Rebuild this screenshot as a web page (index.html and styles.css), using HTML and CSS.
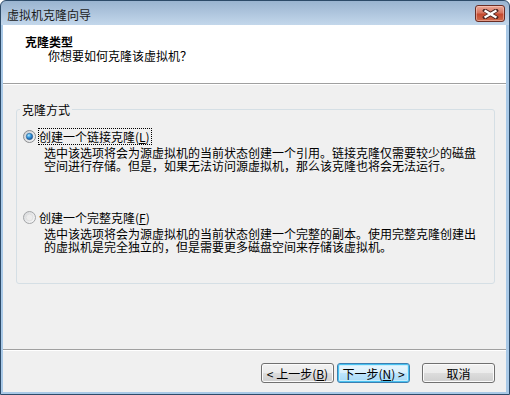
FILE: index.html
```html
<!DOCTYPE html>
<html lang="zh-CN">
<head>
    <meta charset="UTF-8">
    <title>虚拟机克隆向导</title>
    <link rel="stylesheet" href="styles.css">
</head>
<body>
    <div class="window">
        <div class="titlebar">
            <span class="title-text">虚拟机克隆向导</span>
            <button class="close-btn" aria-label="关闭">
                <svg width="17" height="10" viewBox="0 0 17 10">
                    <path d="M3 1.5 L14 8.5 M14 1.5 L3 8.5" stroke="#4a2420" stroke-width="4" stroke-linecap="square"/>
                    <path d="M3.5 2 L13.5 8 M13.5 2 L3.5 8" stroke="#ffffff" stroke-width="2.2" stroke-linecap="square"/>
                </svg>
            </button>
        </div>
        <div class="client">
            <div class="header">
                <div class="header-title">克隆类型</div>
                <div class="header-sub">你想要如何克隆该虚拟机？</div>
            </div>
            <div class="content">
                <fieldset class="group">
                    <legend>克隆方式</legend>
                    <div class="option">
                        <div class="option-row">
                            <svg class="radio" width="13" height="13" viewBox="0 0 13 13">
                                <defs>
                                    <linearGradient id="ringOn" x1="0" y1="0" x2="1" y2="1">
                                        <stop offset="0" stop-color="#c9cdd3"/>
                                        <stop offset="1" stop-color="#f7f7f7"/>
                                    </linearGradient>
                                    <radialGradient id="dot" cx="38%" cy="32%" r="70%">
                                        <stop offset="0" stop-color="#b4ecff"/>
                                        <stop offset="0.45" stop-color="#3a9be0"/>
                                        <stop offset="1" stop-color="#0f4f9a"/>
                                    </radialGradient>
                                </defs>
                                <circle cx="6.5" cy="6.5" r="6" fill="url(#ringOn)" stroke="#8a8c8e"/>
                                <circle cx="6.5" cy="6.5" r="3.2" fill="url(#dot)" stroke="#2a5f8e" stroke-width="0.6"/>
                            </svg>
                            <span class="option-label focused">创建一个链接克隆(<u>L</u>)</span>
                        </div>
                        <div class="option-desc">
                            <div>选中该选项将会为源虚拟机的当前状态创建一个引用。链接克隆仅需要较少的磁盘</div>
                            <div>空间进行存储。但是，如果无法访问源虚拟机，那么该克隆也将会无法运行。</div>
                        </div>
                    </div>
                    <div class="option second">
                        <div class="option-row">
                            <svg class="radio" width="13" height="13" viewBox="0 0 13 13">
                                <defs>
                                    <linearGradient id="ringOff" x1="0" y1="0" x2="1" y2="1">
                                        <stop offset="0" stop-color="#d4d6d9"/>
                                        <stop offset="1" stop-color="#fbfbfb"/>
                                    </linearGradient>
                                </defs>
                                <circle cx="6.5" cy="6.5" r="6" fill="url(#ringOff)" stroke="#a3a5a7"/>
                                <circle cx="6.5" cy="6.5" r="3.4" fill="#ececec" stroke="#d8d8d8" stroke-width="0.6"/>
                            </svg>
                            <span class="option-label">创建一个完整克隆(<u>F</u>)</span>
                        </div>
                        <div class="option-desc">
                            <div>选中该选项将会为源虚拟机的当前状态创建一个完整的副本。使用完整克隆创建出</div>
                            <div>的虚拟机是完全独立的，但是需要更多磁盘空间来存储该虚拟机。</div>
                        </div>
                    </div>
                </fieldset>
            </div>
            <div class="footer">
                <button class="btn">&lt; 上一步(<u>B</u>)</button>
                <button class="btn default">下一步(<u>N</u>) &gt;</button>
                <button class="btn cancel">取消</button>
            </div>
        </div>
    </div>
</body>
</html>
```

FILE: styles.css
```css
* {
    margin: 0;
    padding: 0;
    box-sizing: border-box;
}

body {
    background: #fff;
    color: #000;
    font-family: "Noto Sans CJK SC", "Noto Sans", sans-serif;
    font-size: 12px;
    line-height: 13px;
}

.window {
    width: 510px;
    height: 395px;
    display: flex;
    flex-direction: column;
    border: 1px solid #2d4b69;
    border-radius: 6px 6px 0 0;
    padding: 0 3px 2px 2px;
    background: linear-gradient(to bottom, #9ab4d0 0, #c3d7eb 24px, #a9c9e7 24px, #a9c9e7 100%);
}

.titlebar {
    height: 24px;
    display: flex;
    align-items: flex-start;
    justify-content: space-between;
}

.title-text {
    padding: 7px 0 0 4px;
    color: #1b1b1b;
}

.close-btn {
    width: 30px;
    height: 17px;
    margin: 4px 1px 0 0;
    display: flex;
    align-items: center;
    justify-content: center;
    border: 1px solid #6a2d24;
    border-radius: 3px;
    background: linear-gradient(to bottom, #eaa897 0, #d77560 45%, #c4492f 55%, #cf6a4c 100%);
    box-shadow: inset 0 0 0 1px rgba(255, 220, 210, 0.45);
}

.client {
    flex: 1;
    display: flex;
    flex-direction: column;
    background: #f0f0f0;
}

.header {
    height: 59px;
    padding: 10px 0 0 22px;
    background: #fff;
    border-bottom: 1px solid #a0a0a0;
    box-shadow: 0 1px 0 #fff;
}

.header-title {
    font-weight: bold;
    line-height: 14px;
}

.header-sub {
    padding-left: 23px;
    line-height: 14px;
}

.content {
    flex: 1;
    padding: 19px 11px 0 13px;
}

.group {
    height: 181px;
    border: 1px solid #d5dfe5;
    border-radius: 3px;
    padding: 0;
}

.group legend {
    margin-left: 3px;
    padding: 0 2px;
    line-height: 13px;
}

.option {
    padding: 12px 0 0 6px;
}

.option.second {
    padding-top: 35px;
}

.option-row {
    display: flex;
    align-items: center;
    height: 17px;
}

.radio {
    flex: none;
}

.option-label {
    margin-left: 2px;
    border: 1px solid transparent;
    line-height: 15px;
    padding-right: 1px;
}

.option-label.focused {
    border: 1px dotted #000;
}

.option-desc {
    margin: 3px 0 0 21px;
    font-family: "Liberation Sans", "Noto Sans CJK SC", sans-serif;
    line-height: 13px;
}

.footer {
    height: 43px;
    display: flex;
    justify-content: flex-end;
    padding: 13px 11px 0 0;
    border-top: 1px solid #a0a0a0;
    box-shadow: inset 0 1px 0 #fff;
}

.btn {
    width: 73px;
    height: 20px;
    margin-left: 3px;
    font-family: inherit;
    font-size: 12px;
    line-height: 13px;
    color: #000;
    border: 1px solid #707070;
    border-radius: 3px;
    background: linear-gradient(to bottom, #f2f2f2 0, #ebebeb 50%, #dddddd 50%, #cfcfcf 100%);
    box-shadow: inset 0 0 0 1px #fbfbfb;
}

.btn.default {
    border-color: #3c7fb1;
    background: linear-gradient(to bottom, #eaf6fd 0, #d9f0fc 50%, #bee6fd 50%, #a7d9f5 100%);
    box-shadow: inset 0 0 0 1px #48c1f0, inset 0 0 0 2px #c9edfc;
}

.btn.cancel {
    margin-left: 12px;
}
```
